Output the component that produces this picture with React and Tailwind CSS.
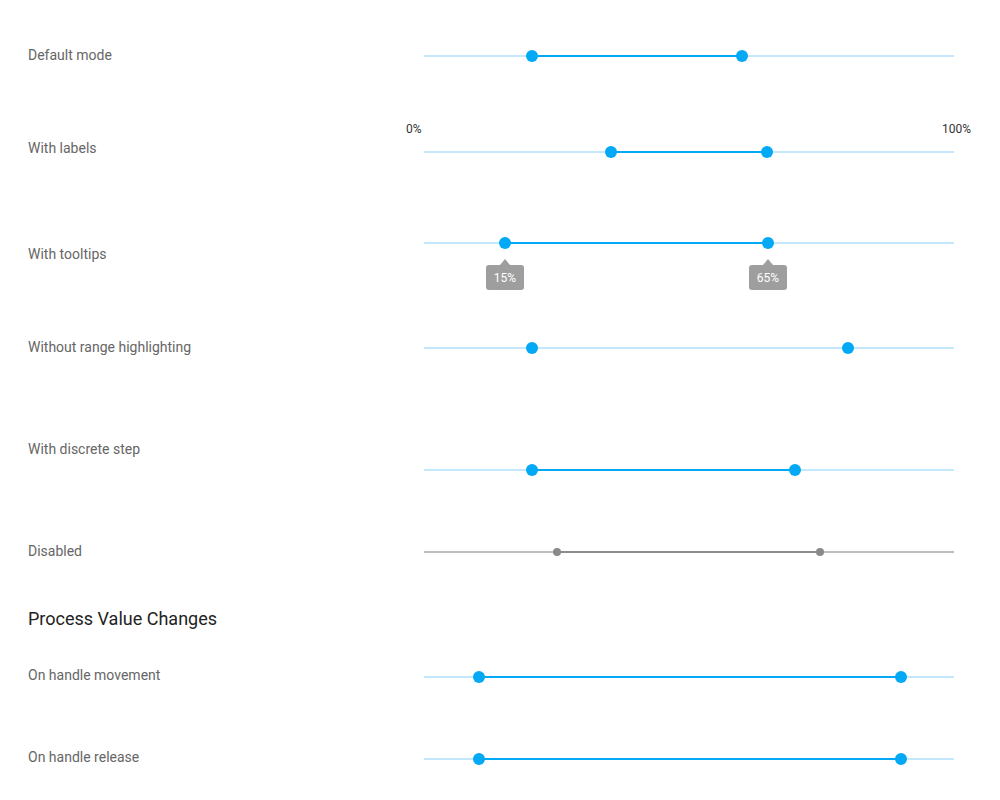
import React from 'react';

// handle centers are measured in px from the left end of the 530px track
const RangeTrack = ({ start, end, highlight = true, disabled = false, labels = false, tooltips = false }) => {
  const knob = disabled ? 8 : 12;
  return (
    <div className="relative w-[530px] h-[40px] flex items-center">
      <div className={`relative w-full h-[2px] ${disabled ? 'bg-[#bdbdbd]' : 'bg-[#c3e8fb]'}`}>
        {highlight && (
          <div
            className={`absolute top-0 h-[2px] ${disabled ? 'bg-[#8c8c8c]' : 'bg-[#03a9f4]'}`}
            style={{ left: `${start}px`, width: `${end - start}px` }}
          />
        )}
        {[start, end].map((x, i) => (
          <div
            key={i}
            className={`absolute rounded-full ${disabled ? 'bg-[#8a8a8a]' : 'bg-[#03a9f4]'}`}
            style={{ left: `${x - knob / 2}px`, top: `${1 - knob / 2}px`, width: `${knob}px`, height: `${knob}px` }}
          />
        ))}
        {tooltips &&
          [
            [start, '15%'],
            [end, '65%'],
          ].map(([x, text]) => (
            <div
              key={text}
              className="absolute top-[17px] flex flex-col items-center"
              style={{ left: `${x - 19}px` }}
            >
              <div className="w-0 h-0 border-l-[5px] border-r-[5px] border-b-[6px] border-l-transparent border-r-transparent border-b-[#9e9e9e]" />
              <div className="w-[38px] h-[25px] bg-[#9e9e9e] rounded-[3px] flex items-center justify-center text-white text-[12px]">
                {text}
              </div>
            </div>
          ))}
      </div>
      {labels && (
        <>
          <span className="absolute left-[-18px] top-[-12px] text-[12px] text-[#333]">0%</span>
          <span className="absolute right-[-17px] top-[-12px] text-[12px] text-[#333]">100%</span>
        </>
      )}
    </div>
  );
};

const Row = ({ label, labelShift = '', className = '', children }) => (
  <div className={`flex items-center ${className}`}>
    <div className={`w-[396px] text-[14px] text-[#666] ${labelShift}`}>{label}</div>
    {children}
  </div>
);

const App = () => {
  return (
    <div className="w-[1000px] h-[800px] bg-white pl-[28px] pt-px overflow-hidden font-['Roboto',sans-serif]">
      <Row label="Default mode" className="mt-[35px]" labelShift="-translate-y-px">
        <RangeTrack start={108} end={318} />
      </Row>
      <Row label="With labels" className="mt-[56px]" labelShift="-translate-y-[4px]">
        <RangeTrack start={187} end={343} labels />
      </Row>
      <Row label="With tooltips" className="mt-[51px]" labelShift="translate-y-[11px]">
        <RangeTrack start={81} end={344} tooltips />
      </Row>
      <Row label="Without range highlighting" className="mt-[65px]" labelShift="-translate-y-px">
        <RangeTrack start={108} end={424} highlight={false} />
      </Row>
      <Row label="With discrete step" className="mt-[82px]" labelShift="-translate-y-[21px]">
        <RangeTrack start={108} end={371} />
      </Row>
      <Row label="Disabled" className="mt-[42px]" labelShift="-translate-y-px">
        <RangeTrack start={133} end={396} disabled />
      </Row>

      <h2 className="mt-[35px] h-[24px] leading-[24px] text-[18px] text-[#232323]">Process Value Changes</h2>

      <Row label="On handle movement" className="mt-[26px]" labelShift="-translate-y-[2px]">
        <RangeTrack start={55} end={477} />
      </Row>
      <Row label="On handle release" className="mt-[42px]" labelShift="-translate-y-[2px]">
        <RangeTrack start={55} end={477} />
      </Row>
    </div>
  );
};

export default App;
